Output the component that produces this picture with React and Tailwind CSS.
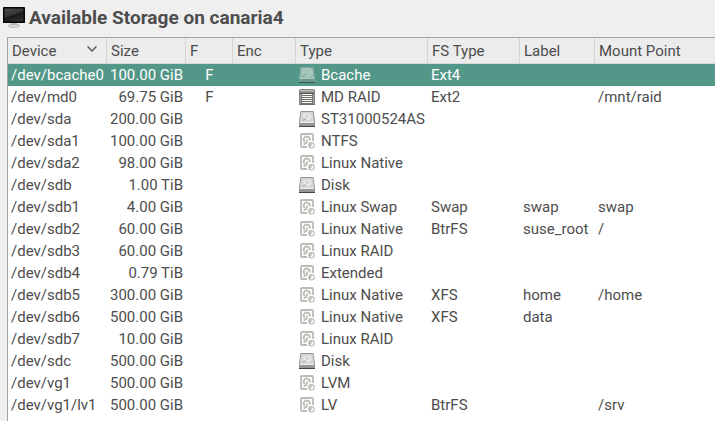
const columns = [
  { title: "Device", sorted: true },
  { title: "Size" },
  { title: "F" },
  { title: "Enc" },
  { title: "Type" },
  { title: "FS Type" },
  { title: "Label" },
  { title: "Mount Point" },
];

const rows = [
  ["/dev/bcache0", "100.00 GiB", "F", "disk", "Bcache", "Ext4", "", ""],
  ["/dev/md0", "69.75 GiB", "F", "raid", "MD RAID", "Ext2", "", "/mnt/raid"],
  ["/dev/sda", "200.00 GiB", "", "disk", "ST31000524AS", "", "", ""],
  ["/dev/sda1", "100.00 GiB", "", "part", "NTFS", "", "", ""],
  ["/dev/sda2", "98.00 GiB", "", "part", "Linux Native", "", "", ""],
  ["/dev/sdb", "1.00 TiB", "", "disk", "Disk", "", "", ""],
  ["/dev/sdb1", "4.00 GiB", "", "part", "Linux Swap", "Swap", "swap", "swap"],
  ["/dev/sdb2", "60.00 GiB", "", "part", "Linux Native", "BtrFS", "suse_root", "/"],
  ["/dev/sdb3", "60.00 GiB", "", "part", "Linux RAID", "", "", ""],
  ["/dev/sdb4", "0.79 TiB", "", "part", "Extended", "", "", ""],
  ["/dev/sdb5", "300.00 GiB", "", "part", "Linux Native", "XFS", "home", "/home"],
  ["/dev/sdb6", "500.00 GiB", "", "part", "Linux Native", "XFS", "data", ""],
  ["/dev/sdb7", "10.00 GiB", "", "part", "Linux RAID", "", "", ""],
  ["/dev/sdc", "500.00 GiB", "", "disk", "Disk", "", "", ""],
  ["/dev/vg1", "500.00 GiB", "", "part", "LVM", "", "", ""],
  ["/dev/vg1/lv1", "500.00 GiB", "", "part", "LV", "BtrFS", "", "/srv"],
];

const grid = "grid grid-cols-[99px_79px_47px_63px_132px_92px_75px_1fr]";

function DiskIcon({ selected }) {
  return (
    <svg width="16" height="16" viewBox="0 0 16 16" className="shrink-0">
      <path d="M1.8 .5h12.4l1.3 10.5v4.5H.5V11z" fill={selected ? "#98bdb2" : "#dadada"} stroke={selected ? "#81aba0" : "#979797"} />
      <path d="M1 12h14v3H1z" fill={selected ? "#6c9489" : "#959595"} />
      <path d="M1 11.5h14" stroke={selected ? "#abcac1" : "#ececec"} />
      <path d="M0 15.5h16" stroke={selected ? "#34594f" : "#454545"} />
      <ellipse cx="8.3" cy="5.5" rx="4.8" ry="4" fill={selected ? "#a4c6bc" : "#e9e9e9"} stroke={selected ? "#b6d2ca" : "#c4c4c4"} strokeWidth=".7" />
      <ellipse cx="8.3" cy="5.2" rx="1.4" ry="1.1" fill={selected ? "#c4dbd4" : "#fff"} stroke={selected ? "#84aba0" : "#a5a5a5"} strokeWidth=".6" />
      <path d="M3.5 9.5l3.6-2" stroke={selected ? "#7ca398" : "#9c9c9c"} />
    </svg>
  );
}

function RaidIcon() {
  return (
    <svg width="16" height="16" viewBox="0 0 16 16" className="shrink-0">
      <rect x=".5" y=".5" width="15" height="15" rx=".6" fill="#9d9d9a" stroke="#82827f" />
      <path d="M1 1.5h14" stroke="#bdbdba" />
      <path d="M1 3.5h14" stroke="#858582" />
      <path d="M1 4.5h14" stroke="#575755" />
      <rect x="2" y="5" width="12" height="10" fill="#747471" />
      <rect x="3" y="5" width="10" height="9" fill="#fafaf9" />
      <path d="M3 6.5h10M3 8.5h10M3 10.5h10M3 12.5h10" stroke="#6d6d6a" />
      <path d="M0 15.5h16" stroke="#6e6e6b" />
    </svg>
  );
}

function PartitionIcon() {
  return (
    <svg width="16" height="16" viewBox="0 0 16 16" className="shrink-0" fill="none" stroke="#bcbbb6">
      <path d="M14 8V2q0-1-1-1H3Q2 1 2 2v11q0 1 1 1h5" strokeWidth="1.8" />
      <path d="M6 9A3 3 0 1 1 10.6 7.5" strokeWidth="1.8" />
      <path d="M8 6.5v2.3q0 1-1 1.3L4.5 11.5" strokeWidth="1.8" />
      <circle cx="12.5" cy="12.3" r="2.7" strokeWidth="1.2" />
      <path d="M12.5 12.3V9.6a2.7 2.7 0 0 0-2.7 2.7 2.7 2.7 0 0 0 .8 1.9z" fill="#bcbbb6" stroke="none" />
    </svg>
  );
}

function MonitorIcon() {
  return (
    <svg width="22" height="22" viewBox="0 0 22 22" className="shrink-0">
      <defs>
        <linearGradient id="screen" x1="0" y1="0" x2=".5" y2="1">
          <stop offset="0" stopColor="#4c4c4c" />
          <stop offset=".55" stopColor="#343434" />
          <stop offset=".62" stopColor="#181818" />
          <stop offset="1" stopColor="#2b2b2b" />
        </linearGradient>
      </defs>
      <path d="M8 16h6l.6 3H7.4z" fill="#b9b9b9" />
      <ellipse cx="11" cy="18.8" rx="5.8" ry="1.5" fill="#dedede" stroke="#a5a5a5" strokeWidth=".7" />
      <rect width="22" height="16" rx=".6" fill="#060606" />
      <rect x="1.5" y="1.5" width="19" height="13" fill="url(#screen)" />
    </svg>
  );
}

function TypeIcon({ kind, selected }) {
  if (kind === "disk") return <DiskIcon selected={selected} />;
  if (kind === "raid") return <RaidIcon />;
  return <PartitionIcon />;
}

export default function App() {
  return (
    <div className="flex h-[421px] w-[715px] flex-col overflow-hidden bg-[#efefef] font-[Roboto,sans-serif] text-[15px] text-[#4d4d4d]">
      <header className="flex h-[37px] shrink-0 items-start gap-1 pt-[7px] pl-[3px]">
        <MonitorIcon />
        <h1 className="text-[19.05px] leading-[22px] font-bold whitespace-nowrap">Available Storage on canaria4</h1>
      </header>
      <main className="ml-[7px] flex-1 border-t border-l border-[#a4a4a4] bg-white">
        <div className={`${grid} h-[26px] border-b border-[#d8d8d8] bg-[#ececec]`}>
          {columns.map((c) => (
            <div key={c.title} className="flex items-center justify-between border-r border-[#d3d3d3] pt-px pr-[9px] pl-1 leading-6 whitespace-nowrap last:border-r-0">
              {c.title}
              {c.sorted && (
                <svg width="10" height="6" viewBox="0 0 10 6" fill="none" stroke="#555" strokeWidth="1.4" className="mb-[5px]">
                  <path d="M.6 .6L5 5L9.4 .6" />
                </svg>
              )}
            </div>
          ))}
        </div>
        {rows.map(([device, size, f, icon, type, fs, label, mount], i) => (
          <div key={device} className={`${grid} h-[22px] leading-[22px] whitespace-nowrap ${i === 0 ? "bg-[#539788] text-white" : ""}`}>
            <span className="pl-[3px]">{device}</span>
            <span className="pr-[3px] text-right">{size}</span>
            <span className="text-center">{f}</span>
            <span />
            <span className="flex items-center gap-[6px] pl-[3px]">
              <TypeIcon kind={icon} selected={i === 0} />
              {type}
            </span>
            <span className="pl-[3px]">{fs}</span>
            <span className="pl-[3px]">{label}</span>
            <span className="pl-[3px]">{mount}</span>
          </div>
        ))}
      </main>
    </div>
  );
}
